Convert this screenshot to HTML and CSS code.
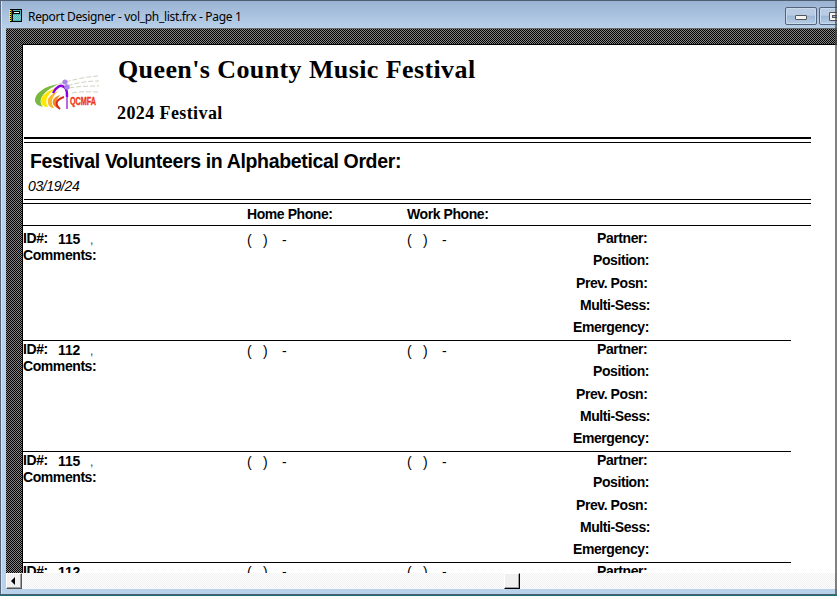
FILE: index.html
```html
<!DOCTYPE html>
<html lang="en">
<head>
<meta charset="utf-8">
<title>Report Designer</title>
<link rel="stylesheet" href="styles.css">
</head>
<body>
<div class="window">
  <header class="titlebar">
    <svg class="app-icon" width="13" height="13" viewBox="0 0 13 13" shape-rendering="crispEdges">
      <path fill="#000" d="M1 0h12v13H1z"/><path fill="#46b6b6" d="M4 1h8v11H4z"/>
      <path stroke="#8ed6d6" stroke-dasharray="1 1" d="M4 6.5h8M5 7.5h7M4 8.5h8M5 9.5h7M4 10.5h8"/>
      <path fill="#008080" d="M2 1h1v11H2z"/>
      <path fill="#ff0" d="M0 1h2v1H0zM0 3h2v1H0zM0 5h2v1H0zM0 7h2v1H0zM0 9h2v1H0zM0 11h2v1H0z"/>
      <path fill="#000" d="M4 2h7v3H4z"/><path fill="#fff" d="M5 3h5v1H5z"/>
    </svg>
    <h1 class="title">Report Designer - vol_ph_list.frx - Page 1</h1>
    <div class="controls">
      <span class="control"><i class="minimize"></i></span>
      <span class="control"><i class="restore"></i></span>
    </div>
  </header>
  <main class="desk">
    <article class="page">
      <header class="letterhead">
        <svg class="logo" width="66" height="36" viewBox="0 0 66 36" fill="none">
          <path d="M24 9C39 4 51 2 63 1M26 13C42 7 54 6 64 6M34 13C46 11 55 11 64 11M37 18C47 16 56 17 63 17" stroke="#c9cdb5" stroke-width=".9" stroke-dasharray="5 2"/>
          <path d="M24 9C10 11 0 18 0 25c0 4 4 6 8 7C2 25 8 16 24 9z" fill="#78b83e"/>
          <path d="M24 12C11 16 6 21 6 26c0 4 3 6 7 6C9 26 12 18 24 12z" fill="#ffe800"/>
          <path d="M23 16c-7 3-11 7-10 11 0 4 3 6 6 6-4-6-2-11 4-17z" fill="#f7b82d"/>
          <path d="M25 20c-6 2-8 5-7 9 1 2 3 4 5 4-3-5-1-9 2-13z" fill="#f08a26"/>
          <path d="M29 22c-9 3-9 8-4 12" stroke="#d8291b" stroke-width="2"/>
          <path d="M18 18c3-6 8-9 11-6 3 2 3 5 3 10" stroke="#8d00dc" stroke-width="2.4"/>
          <path d="M32 20v14" stroke="#8d00dc" stroke-width="1.2"/>
          <circle cx="30" cy="7" r="2.6" fill="#a986e6"/><circle cx="32" cy="12" r="2.7" fill="#a986e6"/>
          <text class="logo-text" x="35" y="30" textLength="26" lengthAdjust="spacingAndGlyphs">QCMFA</text>
        </svg>
        <div class="org">
          <h2 class="org-name">Queen's County Music Festival</h2>
          <p class="org-year">2024 Festival</p>
        </div>
      </header>
      <section class="heading">
        <h3 class="report-title">Festival Volunteers in Alphabetical Order:</h3>
        <p class="report-date">03/19/24</p>
      </section>
      <div class="columns"><b class="home-head">Home Phone:</b><b class="work-head">Work Phone:</b></div>
      <section class="record">
        <div class="who"><p class="id-line"><b>ID#:</b><b class="number">115</b><span>,</span></p><b class="comments">Comments:</b></div>
        <div class="phone"><span>(</span><span>)</span><span>-</span></div>
        <div class="phone"><span>(</span><span>)</span><span>-</span></div>
        <div class="labels"><b class="partner">Partner:</b><b class="position">Position:</b><b class="previous">Prev. Posn:</b><b class="multi">Multi-Sess:</b><b class="emergency">Emergency:</b></div>
      </section>
      <section class="record">
        <div class="who"><p class="id-line"><b>ID#:</b><b class="number">112</b><span>,</span></p><b class="comments">Comments:</b></div>
        <div class="phone"><span>(</span><span>)</span><span>-</span></div>
        <div class="phone"><span>(</span><span>)</span><span>-</span></div>
        <div class="labels"><b class="partner">Partner:</b><b class="position">Position:</b><b class="previous">Prev. Posn:</b><b class="multi">Multi-Sess:</b><b class="emergency">Emergency:</b></div>
      </section>
      <section class="record">
        <div class="who"><p class="id-line"><b>ID#:</b><b class="number">115</b><span>,</span></p><b class="comments">Comments:</b></div>
        <div class="phone"><span>(</span><span>)</span><span>-</span></div>
        <div class="phone"><span>(</span><span>)</span><span>-</span></div>
        <div class="labels"><b class="partner">Partner:</b><b class="position">Position:</b><b class="previous">Prev. Posn:</b><b class="multi">Multi-Sess:</b><b class="emergency">Emergency:</b></div>
      </section>
      <section class="record last">
        <div class="who"><p class="id-line"><b>ID#:</b><b class="number">112</b></p></div>
        <div class="phone"><span>(</span><span>)</span><span>-</span></div>
        <div class="phone"><span>(</span><span>)</span><span>-</span></div>
        <div class="labels"><b class="partner">Partner:</b></div>
      </section>
    </article>
  </main>
  <footer class="scrollbar">
    <span class="scroll-left"><i class="arrow"></i></span>
    <span class="thumb"></span>
  </footer>
  <div class="window-edge"></div>
</div>
</body>
</html>
```
FILE: styles.css
```css
* { box-sizing: border-box; }
body { margin: 0; overflow: hidden; }
h1, h2, h3, p { margin: 0; font-weight: normal; }
.window {
  position: relative; width: 837px; height: 596px; overflow: hidden;
  display: flex; flex-direction: column; padding-left: 6px;
  background: linear-gradient(#9ab3d2, #b9d1ea 28px, #b9d1ea);
  border-top: 1px solid #4f5e70;
  font-family: "Liberation Sans", sans-serif;
}
.window::before { content: ""; position: absolute; left: 0; top: 0; bottom: 0; width: 2px; background: linear-gradient(90deg, #59687c 1px, #d5e4f5 1px); }
.window::after { content: ""; position: absolute; left: 0; right: 0; bottom: 0; height: 2px; background: linear-gradient(#4e5f6a 1px, #1b7078 1px); }
.window-edge { position: absolute; right: 0; top: 0; bottom: 0; width: 2px; background: rgba(70,70,70,.68); }
.titlebar { height: 27px; flex: none; display: flex; align-items: flex-start; padding: 8px 0 0 3px; }
.app-icon { flex: none; }
.title { margin: 0 0 0 6px; width: 230px; white-space: nowrap; font: 12px/15px "Noto Sans", sans-serif; letter-spacing: -.33px; color: #000; }
.controls { margin: -2px 0 0 auto; display: flex; gap: 2px; width: 52px; }
.control { flex: none; width: 32px; height: 18px; border: 1px solid #53637b; border-radius: 2px; box-shadow: inset 0 0 0 1px #c9daed; background: linear-gradient(#b9cce3 45%, #9db6d3 50%, #b6cde7); display: flex; padding: 7px 0 0 9px; }
.minimize { width: 12px; height: 5px; border: 1px solid #51545c; border-radius: 1px; background: #f5f3ef; }
.restore { width: 12px; height: 9px; margin-top: -3px; border: 1px solid #51545c; border-radius: 1px; background: #9eb6d2; box-shadow: inset 0 0 0 2px #f5f3ef, inset 0 0 0 3px #51545c; }
.desk {
  height: 545px; flex: none; padding: 16px 0 0 16px; overflow: hidden;
  border-top: 1px solid #6a6a6a;
  background: repeating-conic-gradient(#000 0 25%, #848484 0 50%) 0 0 / 2px 2px;
}
.page { height: 620px; border: 1px solid #000; border-width: 1px 0 0 1px; background: #fff; color: #000; margin-top: -1px; }
.letterhead { margin-left: 1px; width: 787px; height: 94px; border-bottom: 2px solid #000; display: flex; }
.logo { flex: none; margin: 30px 17px 0 11px; }
.logo-text { font: bold 10px "Liberation Sans", sans-serif; fill: #ee3a20; stroke: #ee3a20; stroke-width: .4; }
.org { font-family: "Liberation Serif", serif; white-space: nowrap; }
.org-name { margin-top: 9px; font-size: 26px; line-height: 32px; font-weight: bold; letter-spacing: .4px; }
.org-year { margin: 17px 0 0 -1px; font-size: 18px; line-height: 20px; font-weight: bold; letter-spacing: .4px; }
.heading { margin: 3px 0 0 1px; width: 787px; height: 58px; border-top: 1px solid #000; border-bottom: 1px solid #000; padding-top: 6px; white-space: nowrap; }
.report-title { margin-left: 6px; font-size: 19.5px; line-height: 24px; font-weight: bold; letter-spacing: -.35px; }
.report-date { margin: 5px 0 0 4px; font-size: 14px; line-height: 16px; font-style: italic; letter-spacing: -.4px; }
.columns { margin: 3px 0 4px; width: 788px; height: 23px; border-top: 1px solid #000; border-bottom: 1px solid #000; display: grid; grid-template-columns: 224px 160px 160px; font-size: 14px; line-height: 20px; letter-spacing: -.42px; }
.columns b { grid-row: 1; }
.home-head { grid-column: 2; }
.work-head { grid-column: 3; }
.record { width: 768px; height: 111px; border-bottom: 1px solid #000; display: grid; grid-template-columns: 224px 160px 160px 1fr; font-size: 14px; line-height: 16px; letter-spacing: -.42px; white-space: nowrap; }
.id-line { display: grid; grid-template-columns: 35px 32px 1fr; height: 17px; }
.id-line span { font-size: 12px; padding-top: 2px; color: #3a3a4c; }
.number { padding-top: 1px; letter-spacing: -.1px; }
.comments { display: block; }
.phone { display: grid; grid-template-columns: 16px 19px 1fr; grid-auto-rows: 16px; padding-top: 2px; }
.last .phone { padding-top: 1px; }
.labels { display: flex; flex-direction: column; gap: 6.3px; }
.partner { margin-left: 30px; }
.position { margin-left: 26px; }
.previous { margin-left: 9px; }
.multi { margin-left: 13px; }
.emergency { margin-left: 6px; }
.scrollbar { height: 16px; flex: none; display: flex; background: repeating-conic-gradient(#f0f0f0 0 25%, #fff 0 50%) 0 0 / 2px 2px; }
.scroll-left, .thumb { width: 16px; height: 16px; flex: none; background: #f0f0f0; border: 1px solid #fff; border-right-color: #555; border-bottom-color: #555; box-shadow: inset -1px -1px #a0a0a0; }
.scroll-left { display: flex; padding: 3px 0 0 4px; }
.arrow { border: 4px solid transparent; border-left: 0; border-right-color: #000; height: 8px; }
.thumb { margin-left: 482px; border-right-color: #000; border-bottom-color: #000; }
```
